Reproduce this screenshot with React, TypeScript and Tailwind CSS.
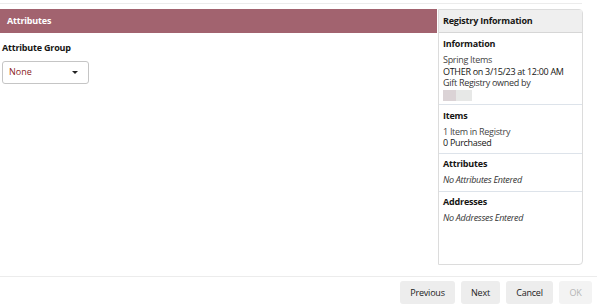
const sections = [
  {
    title: "Items",
    lines: ["1 Item in Registry", "0 Purchased"],
  },
];

export default function App() {
  return (
    <div
      className="w-[597px] h-[308px] bg-white flex flex-col text-[9px] text-[#161513]"
      style={{ fontFamily: '"Open Sans", "Noto Sans", sans-serif' }}
    >
      <div className="h-[4px] border-b border-[#ececec] w-[582px]" />
      <div className="flex flex-1 pt-[5px]">
        <div className="w-[437px] flex flex-col">
          <div className="h-[24px] bg-[#a2636f] flex items-center px-[7px] text-white font-bold tracking-[-0.2px]">
            Attributes
          </div>
          <div className="px-[2px] pt-[8px] font-bold tracking-[-0.2px]">Attribute Group</div>
          <div className="ml-[2px] mt-[6px] w-[87px] h-[23px] border border-[#c5c5c5] rounded-[3px] flex items-center justify-between pl-[6px] pr-[10px]">
            <span className="text-[#8a1c1c]">None</span>
            <svg width="6" height="3" viewBox="0 0 6 3">
              <path d="M0 0h6L3 3z" fill="#222" />
            </svg>
          </div>
        </div>
        <div className="ml-[1px] w-[145px] h-[256px] border border-[#dcdcdc] rounded-tr-[4px] rounded-br-[4px] flex flex-col">
          <div className="h-[23px] bg-[#efefef] border-b border-[#d6d6d6] flex items-center px-[4px] font-bold tracking-[-0.2px]">
            Registry Information
          </div>
          <div className="px-[4px] pt-[4px] pb-[3px] border-b border-[#dde3ea]">
            <div className="font-bold leading-[14px] tracking-[-0.2px]">Information</div>
            <div className="mt-[3px] leading-[11.5px] tracking-[-0.3px]">
              <div className="text-[#444]">Spring Items</div>
              <div>OTHER on 3/15/23 at 12:00 AM</div>
              <div className="text-[#333]">Gift Registry owned by</div>
              <div className="flex mt-[1px]">
                <div className="w-[13px] h-[11px] bg-[#dbd3d6]" />
                <div className="w-[16px] h-[11px] bg-[#e7e8e7]" />
              </div>
            </div>
          </div>
          {sections.map((s) => (
            <div key={s.title} className="px-[4px] pt-[4px] pb-[4px] border-b border-[#dde3ea]">
              <div className="font-bold leading-[14px] tracking-[-0.2px]">{s.title}</div>
              <div className="mt-[3px] leading-[11.5px] tracking-[-0.3px]">
                <div className="text-[#444]">{s.lines[0]}</div>
                <div>{s.lines[1]}</div>
              </div>
            </div>
          ))}
          <div className="px-[4px] pt-[3px] pb-[5px] border-b border-[#dde3ea]">
            <div className="font-bold leading-[14px] tracking-[-0.2px]">Attributes</div>
            <div className="mt-[3px] italic leading-[12px] tracking-[-0.3px] text-[#333]">No Attributes Entered</div>
          </div>
          <div className="px-[4px] pt-[3px] pb-[5px]">
            <div className="font-bold leading-[14px] tracking-[-0.2px]">Addresses</div>
            <div className="mt-[3px] italic leading-[12px] tracking-[-0.3px] text-[#333]">No Addresses Entered</div>
          </div>
        </div>
      </div>
      <div className="h-[32px] border-t border-[#ececec] flex items-start justify-end gap-[6px] pt-[4px] pr-[5px] tracking-[-0.2px]">
        <button className="w-[55px] h-[23px] bg-[#ededed] rounded-[3px] text-[#222]">Previous</button>
        <button className="w-[39px] h-[23px] bg-[#ededed] rounded-[3px] text-[#222]">Next</button>
        <button className="w-[47px] h-[23px] bg-[#ededed] rounded-[3px] text-[#222]">Cancel</button>
        <button className="w-[33px] h-[23px] bg-[#f3f3f3] rounded-[3px] text-[#b5b5b5]">OK</button>
      </div>
    </div>
  );
}
